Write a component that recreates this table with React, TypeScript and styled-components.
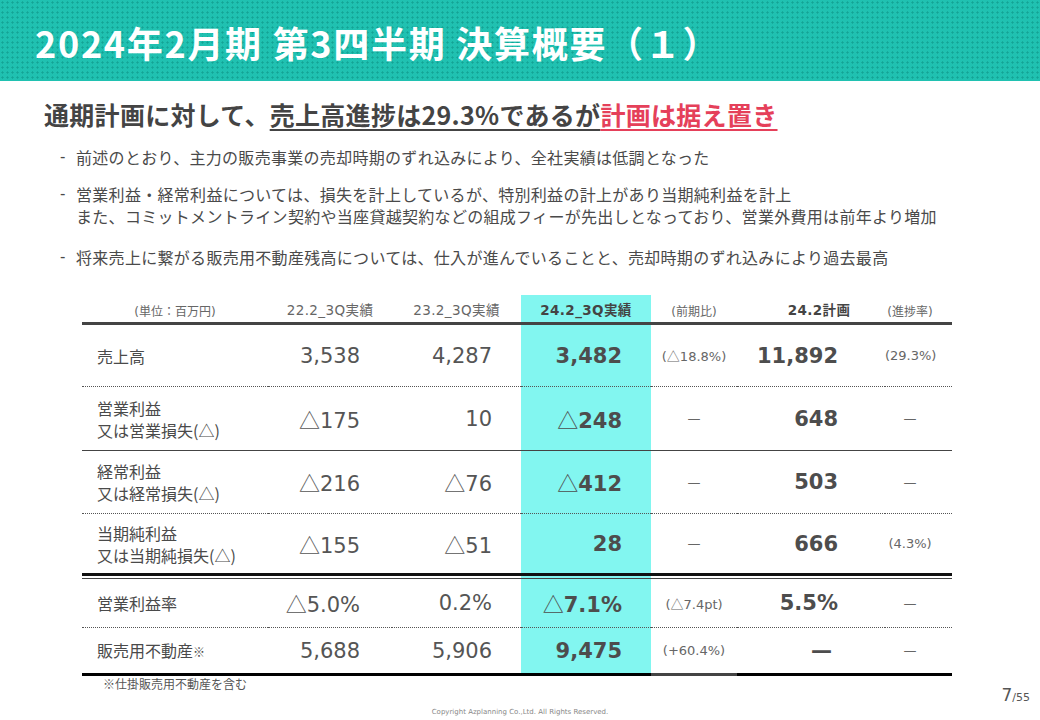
import React from 'react';
import styled, { createGlobalStyle } from 'styled-components';

const GlobalStyle = createGlobalStyle`
  html, body {
    margin: 0;
    padding: 0;
    background: #ffffff;
  }
  body {
    font-family: "Noto Sans CJK JP", "Noto Sans", sans-serif;
    color: #444;
  }
`;

type Row = {
  label: string[];
  values: string[];
  line: 'dotted' | 'solid' | 'thick' | 'bottom';
  h: number;
  note?: boolean;
};

const rows: Row[] = [
  { label: ['売上高'], values: ['3,538', '4,287', '3,482', '(△18.8%)', '11,892', '(29.3%)'], line: 'dotted', h: 62 },
  { label: ['営業利益', '又は営業損失(△)'], values: ['△175', '10', '△248', '—', '648', '—'], line: 'solid', h: 64 },
  { label: ['経常利益', '又は経常損失(△)'], values: ['△216', '△76', '△412', '—', '503', '—'], line: 'dotted', h: 63 },
  { label: ['当期純利益', '又は当期純損失(△)'], values: ['△155', '△51', '28', '—', '666', '(4.3%)'], line: 'thick', h: 62 },
];

const rows2: Row[] = [
  { label: ['営業利益率'], values: ['△5.0%', '0.2%', '△7.1%', '(△7.4pt)', '5.5%', '—'], line: 'dotted', h: 49 },
  { label: ['販売用不動産'], values: ['5,688', '5,906', '9,475', '(+60.4%)', '—', '—'], line: 'bottom', h: 48, note: true },
];

// split the triangle out so it uses the CJK glyph (thin and full width)
const Num: React.FC<{ text: string }> = ({ text }) => {
  const parts = text.split('△');
  return (
    <>
      {parts.map((p, i) => (
        <React.Fragment key={i}>
          {i > 0 && <Tri>△</Tri>}
          {p}
        </React.Fragment>
      ))}
    </>
  );
};

const BodyRow: React.FC<{ row: Row }> = ({ row }) => {
  const [c1, c2, c3, c4, c5, c6] = row.values;
  return (
    <Tr $h={row.h}>
      <LabelCell $line={row.line}>
        {row.label.map((l, i) => (
          <div key={i}>
            {l}
            {row.note && <Mark>※</Mark>}
          </div>
        ))}
      </LabelCell>
      <ValCell $line={row.line} $pr={32}><Num text={c1} /></ValCell>
      <ValCell $line={row.line} $pr={29}><Num text={c2} /></ValCell>
      <ValCell $line={row.line} $pr={29} $hl $bold><Num text={c3} /></ValCell>
      <SmallCell $line={row.line} $gray><Num text={c4} /></SmallCell>
      <ValCell $line={row.line} $pr={c5 === '—' ? 53 : 47} $bold><Num text={c5} /></ValCell>
      <SmallCell $line={row.line} $pr={17}><Num text={c6} /></SmallCell>
    </Tr>
  );
};

const App: React.FC = () => {
  return (
    <Slide>
      <GlobalStyle />
      <Header>
        <Title>2024年2月期 第3四半期 決算概要（１）</Title>
      </Header>

      <Lead>
        通期計画に対して、<Under>売上高進捗は29.3%であるが</Under>
        <Red>計画は据え置き</Red>
      </Lead>

      <Bullets>
        <Bullet>
          <Dash>-</Dash>
          <span>前述のとおり、主力の販売事業の売却時期のずれ込みにより、全社実績は低調となった</span>
        </Bullet>
        <Bullet $mt={15}>
          <Dash>-</Dash>
          <span>
            営業利益・経常利益については、損失を計上しているが、特別利益の計上があり当期純利益を計上
            <br />
            また、コミットメントライン契約や当座貸越契約などの組成フィーが先出しとなっており、営業外費用は前年より増加
          </span>
        </Bullet>
        <Bullet $mt={19}>
          <Dash>-</Dash>
          <span>将来売上に繋がる販売用不動産残高については、仕入が進んでいることと、売却時期のずれ込みにより過去最高</span>
        </Bullet>
      </Bullets>

      <Table>
        <colgroup>
          <col style={{ width: 186 }} />
          <col style={{ width: 124 }} />
          <col style={{ width: 129 }} />
          <col style={{ width: 130 }} />
          <col style={{ width: 86 }} />
          <col style={{ width: 148 }} />
          <col style={{ width: 67 }} />
        </colgroup>
        <thead>
          <tr>
            <HeadCell $small>(単位：百万円)</HeadCell>
            <HeadCell>22.2_3Q実績</HeadCell>
            <HeadCell>23.2_3Q実績</HeadCell>
            <HeadCell $hl $bold>24.2_3Q実績</HeadCell>
            <HeadCell $small>(前期比)</HeadCell>
            <HeadCell $bold $pl={16}>24.2計画</HeadCell>
            <HeadCell $small $pr={17}>(進捗率)</HeadCell>
          </tr>
        </thead>
        <tbody>
          {rows.map((r, i) => (
            <BodyRow key={i} row={r} />
          ))}
          <tr>
            <GapCell />
            <GapCell />
            <GapCell />
            <GapCell $hl />
            <GapCell />
            <GapCell />
            <GapCell />
          </tr>
          {rows2.map((r, i) => (
            <BodyRow key={i} row={r} />
          ))}
        </tbody>
      </Table>

      <Footer>
        <FootNote>※仕掛販売用不動産を含む</FootNote>
        <Copyright>Copyright Azplanning Co.,Ltd. All Rights Reserved.</Copyright>
        <PageNo>
          7<PageTotal>/55</PageTotal>
        </PageNo>
      </Footer>
    </Slide>
  );
};

const Slide = styled.div`
  width: 1040px;
  height: 720px;
  display: flex;
  flex-direction: column;
  overflow: hidden;
  background: #fff;
`;

const Header = styled.header`
  height: 81px;
  flex: none;
  display: flex;
  align-items: center;
  padding-left: 35px;
  box-sizing: border-box;
  background-color: #20c1b1;
  background-image: radial-gradient(circle, rgba(10, 140, 128, 0.55) 0.9px, transparent 1.3px);
  background-size: 5px 5px;
`;

const Title = styled.h1`
  margin: 0;
  color: #ffffff;
  font-size: 36px;
  font-weight: 700;
  letter-spacing: 1.7px;
  line-height: 1;
  padding-top: 2px;
`;

const Lead = styled.div`
  margin: 16px 0 0 44px;
  font-size: 25px;
  font-weight: 700;
  line-height: 34px;
  letter-spacing: 0.3px;
  color: #444;
`;

const Under = styled.span`
  text-decoration: underline;
  text-decoration-thickness: 2px;
  text-underline-offset: 4px;
  text-decoration-color: #444;
`;

const Red = styled.span`
  color: #e5405a;
  text-decoration: underline;
  text-decoration-thickness: 2px;
  text-underline-offset: 4px;
  text-decoration-color: #e5405a;
`;

const Bullets = styled.div`
  margin: 15px 0 0 60px;
  display: flex;
  flex-direction: column;
`;

const Bullet = styled.div<{ $mt?: number }>`
  display: flex;
  margin-top: ${(p) => p.$mt ?? 0}px;
  font-size: 16px;
  line-height: 22px;
  letter-spacing: 0.3px;
  color: #4a4a4a;
  white-space: nowrap;
`;

const Dash = styled.span`
  width: 16px;
  flex: none;
  font-family: "DejaVu Sans", sans-serif;
  font-size: 15px;
`;

const Table = styled.table`
  margin: 27px 0 0 82px;
  width: 870px;
  table-layout: fixed;
  border-collapse: separate;
  border-spacing: 0;
`;

const HeadCell = styled.th<{ $hl?: boolean; $bold?: boolean; $small?: boolean; $pl?: number; $pr?: number }>`
  height: 24px;
  padding: ${(p) => (p.$small ? '3px' : '0')} ${(p) => p.$pr ?? 0}px 0 ${(p) => p.$pl ?? 0}px;
  text-align: center;
  vertical-align: middle;
  border-bottom: 3px solid #444;
  background: ${(p) => (p.$hl ? '#82f6f0' : 'transparent')};
  font-family: "DejaVu Sans", "Noto Sans CJK JP", sans-serif;
  font-size: ${(p) => (p.$small ? '12px' : '13.5px')};
  font-weight: ${(p) => (p.$bold ? 700 : 400)};
  color: ${(p) => (p.$bold ? '#444' : '#666')};
  letter-spacing: ${(p) => (p.$small ? '0' : '0.4px')};
  white-space: nowrap;
`;

const lineStyle = (line: Row['line']) => {
  switch (line) {
    case 'dotted':
      return '1px dotted #555';
    case 'solid':
      return '1px solid #444';
    case 'thick':
      return '3px solid #111';
    default:
      return '3px solid #000';
  }
};

const Tr = styled.tr<{ $h: number }>`
  height: ${(p) => p.$h}px;
`;

const LabelCell = styled.td<{ $line: Row['line'] }>`
  padding: 0 0 0 15px;
  vertical-align: middle;
  border-bottom: ${(p) => lineStyle(p.$line)};
  font-size: 16px;
  line-height: 22px;
  color: #4a4a4a;
  white-space: nowrap;
`;

const Mark = styled.span`
  font-size: 12px;
`;

const ValCell = styled.td<{ $line: Row['line']; $pr: number; $hl?: boolean; $bold?: boolean }>`
  padding: 0 ${(p) => p.$pr}px 0 0;
  text-align: right;
  vertical-align: middle;
  border-bottom: ${(p) => lineStyle(p.$line)};
  background: ${(p) => (p.$hl ? '#82f6f0' : 'transparent')};
  font-family: "DejaVu Sans", sans-serif;
  font-size: 21px;
  font-weight: ${(p) => (p.$bold ? 700 : 400)};
  color: ${(p) => (p.$bold ? '#4d4d4d' : '#555')};
  white-space: nowrap;
`;

const SmallCell = styled.td<{ $line: Row['line']; $pr?: number; $gray?: boolean }>`
  padding: 0 ${(p) => p.$pr ?? 0}px 0 0;
  text-align: center;
  vertical-align: middle;
  border-bottom: ${(p) => (p.$line === 'bottom' && p.$gray ? '3px solid #444' : lineStyle(p.$line))};
  font-family: "DejaVu Sans", sans-serif;
  font-size: 13px;
  color: #666;
  white-space: nowrap;
`;

const GapCell = styled.td<{ $hl?: boolean }>`
  height: 2px;
  padding: 0;
  font-size: 0;
  line-height: 0;
  border-bottom: 1px solid #444;
  background: ${(p) => (p.$hl ? '#82f6f0' : 'transparent')};
`;

const Tri = styled.span`
  font-family: "Noto Sans CJK JP", sans-serif;
  font-weight: 400;
`;

const Footer = styled.footer`
  flex: 1;
  display: grid;
  grid-template-columns: 1fr auto 1fr;
`;

const FootNote = styled.div`
  padding-left: 103px;
  font-size: 12px;
  line-height: 16px;
  color: #555;
`;

const Copyright = styled.div`
  align-self: end;
  padding-bottom: 3px;
  font-family: "DejaVu Sans", sans-serif;
  font-size: 7px;
  line-height: 10px;
  color: #888;
`;

const PageNo = styled.div`
  justify-self: end;
  padding: 9px 10px 0 0;
  font-family: "DejaVu Sans", sans-serif;
  font-size: 17px;
  line-height: 20px;
  color: #555;
`;

const PageTotal = styled.span`
  font-size: 11px;
`;

export default App;
